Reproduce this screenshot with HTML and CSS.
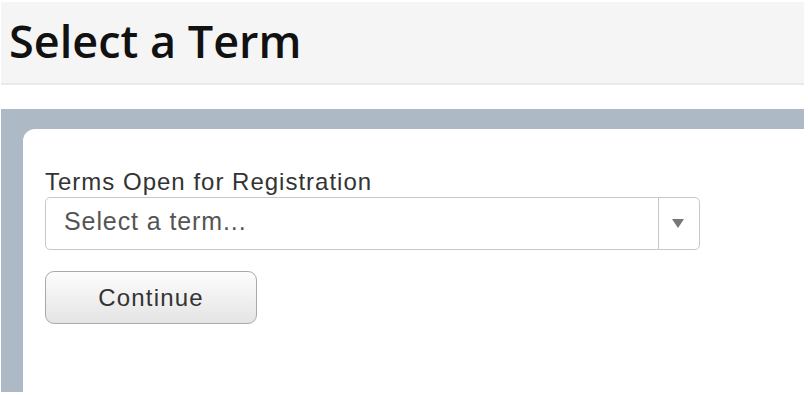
FILE: index.html
```html
<!DOCTYPE html>
<html lang="en">
<head>
    <meta charset="UTF-8">
    <meta name="viewport" content="width=device-width, initial-scale=1.0">
    <title>Select a Term</title>
    <link rel="stylesheet" href="styles.css">
</head>
<body>
    <div class="page-header">
        <h1>Select a Term</h1>
    </div>

    <div class="panel">
        <div class="card">
            <label class="field-label" for="term">Terms Open for Registration</label>
            <div class="select">
                <span class="select-text">Select a term...</span>
                <span class="select-arrow"></span>
            </div>
            <button class="btn" id="term">Continue</button>
        </div>
    </div>
</body>
</html>
```

FILE: styles.css
```css
body { margin: 0; padding: 2px 4px 0 1px; background: #fff; font-family: "Liberation Sans", Arial, sans-serif; }
.page-header { background: #f5f5f5; border-bottom: 2px solid #e9e9e9; height: 81px; padding-left: 8px; }
.page-header h1 { margin: 0; font-family: "Open Sans", sans-serif; font-weight: 600; font-size: 45px; line-height: 77px; color: #111; }
.panel { margin-top: 24px; background: #adbac6; padding: 20px 0 0 22px; height: 263px; }
.card { background: #fff; border-radius: 12px 0 0 0; height: 100%; padding: 40px 0 0 22px; box-sizing: border-box; }
.field-label { display: block; font-size: 24px; letter-spacing: 1px; color: #333; line-height: 26px; }
.select { display: flex; margin-top: 2px; width: 655px; height: 53px; border: 1px solid #c8c8c8; border-radius: 5px; box-sizing: border-box; }
.select-text { flex: 1; padding-left: 18px; font-size: 25px; letter-spacing: 0.9px; line-height: 47px; color: #555; }
.select-arrow { width: 40px; border-left: 1px solid #c8c8c8; position: relative; }
.select-arrow::after { content: ""; position: absolute; left: 13px; top: 21px; border-left: 6px solid transparent; border-right: 6px solid transparent; border-top: 9px solid #777; }
.btn { display: block; margin-top: 21px; width: 212px; height: 53px; padding: 0; border: 1px solid #a9a9a9; border-radius: 9px; background: linear-gradient(#fdfdfd, #e4e4e4); font-family: "Liberation Sans", Arial, sans-serif; font-size: 24px; letter-spacing: 1.2px; color: #333; cursor: pointer; }
```
